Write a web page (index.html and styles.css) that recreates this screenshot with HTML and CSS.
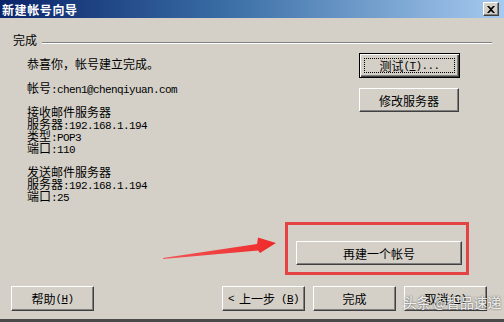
FILE: index.html
```html
<!doctype html>
<html lang="zh-CN">
<head>
    <meta charset="utf-8">
    <title>新建帐号向导</title>
    <link rel="stylesheet" href="styles.css">
</head>
<body>
<div class="titlebar">
    <span class="title">新建帐号向导</span>
    <span class="close">
        <svg width="8" height="7" viewBox="0 0 8 7"><path d="M0 0h2l2 2 2-2h2L5 3.5 8 7H6L4 5 2 7H0l3-3.5z" fill="#000"></path></svg>
    </span>
</div>

<div class="main">
    <div class="group-head">
        <span>完成</span>
        <span class="rule"></span>
    </div>

    <div class="content">
        <div class="info">
            <div class="para">
                <div class="line">恭喜你，帐号建立完成。</div>
            </div>
            <div class="para">
                <div class="line">帐号<span class="mono">:chen1@chenqiyuan.com</span></div>
            </div>
            <div class="para">
                <div class="line">接收邮件服务器</div>
                <div class="line">服务器<span class="mono">:192.168.1.194</span></div>
                <div class="line">类型<span class="mono">:POP3</span></div>
                <div class="line">端口<span class="mono">:110</span></div>
            </div>
            <div class="para">
                <div class="line">发送邮件服务器</div>
                <div class="line">服务器<span class="mono">:192.168.1.194</span></div>
                <div class="line">端口<span class="mono">:25</span></div>
            </div>
        </div>

        <div class="actions">
            <button class="btn default" id="test">测试<span class="mono">(<u>T</u>)...</span></button>
            <button class="btn" id="modify">修改服务器</button>
            <button class="btn" id="again">再建一个帐号</button>
        </div>
    </div>
</div>

<div class="footer">
    <button class="btn" id="help">帮助<span class="mono">(<u>H</u>)</span></button>
    <button class="btn" id="back"><span class="mono lt">&lt;</span>上一步<span class="mono key">(<u>B</u>)</span></button>
    <button class="btn" id="finish">完成</button>
    <button class="btn" id="cancel">取消<span class="mono">(<u>C</u>)</span></button>
</div>

<!-- annotations drawn over the screenshot -->
<div class="highlight"></div>
<svg class="arrow" width="504" height="322">
    <defs>
        <linearGradient id="arrow-fill" x1="0" x2="1" y1="0" y2="0">
            <stop offset="0" stop-color="#f25555"></stop>
            <stop offset="1" stop-color="#ee2a2a"></stop>
        </linearGradient>
    </defs>
    <polygon points="163,258 257,244 258,237.5 276,243 260,253 258,250.5 163,259" fill="url(#arrow-fill)"></polygon>
</svg>
<span class="watermark">头条 @智品速递</span>
</body>
</html>
```

FILE: styles.css
```css
* {
    box-sizing: border-box;
}

body {
    margin: 0;
    width: 504px;
    height: 322px;
    overflow: hidden;
    position: relative;
    display: flex;
    flex-direction: column;
    background-color: #d4d0c8;
    border-bottom: 3px solid #4a4a4a;
    font: 12px "Noto Sans CJK SC", sans-serif;
    color: #000;
}

.mono {
    font-family: "Liberation Mono", monospace;
    font-size: 11px;
    letter-spacing: -0.6px;
}

.titlebar {
    flex: none;
    height: 18px;
    display: flex;
    align-items: center;
    justify-content: space-between;
    padding: 0 5px 0 2px;
    background: linear-gradient(to right, #0a246a, #3a6ea5 45%, #a6caf0);
}

.title {
    color: #fff;
    font-weight: bold;
    letter-spacing: 0.6px;
}

.close {
    width: 16px;
    height: 14px;
    display: flex;
    align-items: center;
    justify-content: center;
    background-color: #d4d0c8;
    border: 1px solid;
    border-color: #fff #404040 #404040 #fff;
    box-shadow: inset -1px -1px #808080;
}

.main {
    flex: 1;
    padding: 16px 12px 0 0;
}

.group-head {
    display: flex;
    height: 12px;
    line-height: 12px;
    padding-left: 13px;
}

.group-head .rule {
    flex: 1;
    margin: 8px 0 0 5px;
    height: 2px;
    border-top: 1px solid #808080;
    border-bottom: 1px solid #fff;
}

.content {
    display: flex;
    margin-top: 7px;
    padding: 0 30px 0 27px;
}

.info {
    flex: 1;
    padding-top: 5px;
}

.para + .para {
    margin-top: 12px;
}

.line {
    height: 12px;
    line-height: 12px;
    white-space: nowrap;
}

.actions {
    display: flex;
    flex-direction: column;
    align-items: flex-end;
}

.btn {
    position: relative;
    height: 24px;
    padding: 0;
    display: flex;
    align-items: center;
    justify-content: center;
    background-color: #d4d0c8;
    border: 1px solid;
    border-color: #fff #404040 #404040 #fff;
    box-shadow: inset -1px -1px #808080;
    font: inherit;
    color: #000;
}

.btn.default {
    border-color: #000;
    box-shadow: inset 1px 1px #fff, inset -1px -1px #404040, inset -2px -2px #808080;
}

.btn.default::after {
    content: "";
    position: absolute;
    inset: 4px;
    border: 1px dotted #000;
}

#test {
    width: 101px;
    height: 25px;
    margin-right: 2px;
}

#modify {
    width: 100px;
    margin-top: 10px;
    margin-right: 3px;
}

#again {
    width: 166px;
    margin-top: 129px;
}

.footer {
    flex: none;
    display: flex;
    padding: 0 17px 8px 11px;
}

.footer .btn {
    width: 83px;
    height: 25px;
}

#help {
    margin-right: auto;
}

#back,
#finish {
    margin-right: 8px;
}

#back .lt {
    margin-right: 5px;
}

#back .key {
    margin-left: 6px;
}

.highlight {
    position: absolute;
    left: 285px;
    top: 222px;
    width: 184px;
    height: 53px;
    border: 3px solid #e54343;
}

.arrow {
    position: absolute;
    left: 0;
    top: 0;
    pointer-events: none;
}

.watermark {
    position: absolute;
    left: 403px;
    top: 292px;
    font-size: 14px;
    line-height: 20px;
    letter-spacing: -0.3px;
    color: rgba(255, 255, 255, 0.9);
    text-shadow: 0 0 2px rgba(0, 0, 0, 0.7);
    white-space: nowrap;
}
```
